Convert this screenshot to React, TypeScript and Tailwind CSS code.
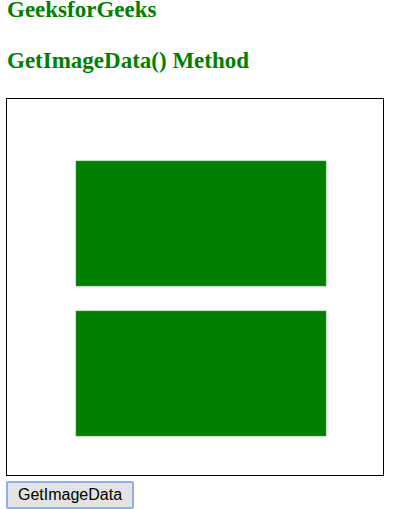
export default function App() {
  return (
    <main className="w-[400px] h-[509px] bg-white overflow-hidden px-[6px] font-['Liberation_Serif',serif]">
      {/* Headings */}
      <h2 className="pl-px text-[23px] leading-[20px] font-bold text-[#008000]">GeeksforGeeks</h2>
      <h2 className="mt-[28px] pl-px text-[23px] leading-[26px] font-bold text-[#008000]">
        GetImageData() Method
      </h2>

      {/* Canvas */}
      <div className="mt-[24px] w-[378px] h-[378px] border border-black">
        <svg width="376" height="376" viewBox="0 0 376 376">
          <rect x="69" y="62" width="250" height="125" fill="#008000" stroke="#3a9a3a" strokeWidth="0.6" />
          <rect x="69" y="212" width="250" height="125" fill="#008000" stroke="#3a9a3a" strokeWidth="0.6" />
        </svg>
      </div>

      {/* Button */}
      <button className="mt-[5px] h-[28px] w-[128px] bg-[#e3e4e2] border-2 border-[#8fb0ec] rounded-[2px] text-[16px] leading-none text-black font-['Liberation_Sans',sans-serif]">
        GetImageData
      </button>
    </main>
  );
}
